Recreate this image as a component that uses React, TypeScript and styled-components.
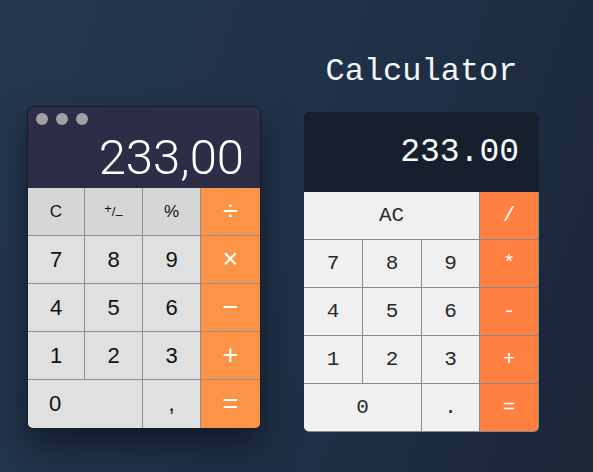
import React from "react";
import styled, { createGlobalStyle } from "styled-components";

const Global = createGlobalStyle`
  html, body { margin: 0; padding: 0; }
  body {
    width: 593px;
    height: 472px;
    overflow: hidden;
    background: linear-gradient(110deg, #23384f 0%, #1f3148 50%, #1b2638 100%);
  }
`;

const Page = styled.div`
  display: flex;
  align-items: flex-start;
  gap: 44px;
  padding-left: 28px;
  height: 472px;
  box-sizing: border-box;
`;

/* ---------- Left: mac style window ---------- */
const Window = styled.div`
  margin-top: 107px;
  width: 232px;
  border-radius: 5px;
  overflow: hidden;
  background: linear-gradient(180deg, #2d2d48 0%, #2a2b43 100%);
  box-shadow: 0 0 0 1px #151d28, 0 18px 34px rgba(5, 10, 18, 0.55);
`;

const TitleBar = styled.div`
  display: flex;
  gap: 8px;
  padding: 6px 0 0 8px;
  height: 20px;
  box-sizing: border-box;
`;

const Dot = styled.span`
  width: 12px;
  height: 12px;
  border-radius: 50%;
  background: #9e9ea3;
`;

const MacDisplay = styled.div`
  height: 61px;
  display: flex;
  align-items: center;
  justify-content: flex-end;
  padding-right: 16px;
  color: #ffffff;
  font-family: Roboto, "Liberation Sans", sans-serif;
  font-weight: 300;
  font-size: 49px;
`;

const MacPad = styled.div`
  display: grid;
  grid-template-columns: 56px 57px 57px 59px;
  grid-template-rows: 47px 47px 47px 47px 48px;
  gap: 1px;
  background: #8f8f8f;
`;

const MacKey = styled.div<{ $kind?: "fn" | "op" | "num"; $span?: number; $left?: boolean }>`
  grid-column: span ${(p) => p.$span ?? 1};
  display: flex;
  align-items: center;
  justify-content: ${(p) => (p.$left ? "flex-start" : "center")};
  padding-left: ${(p) => (p.$left ? "21px" : "0")};
  background: ${(p) => (p.$kind === "op" ? "#fb9446" : p.$kind === "fn" ? "#d6d6d6" : "#e0e0e0")};
  color: ${(p) => (p.$kind === "op" ? "#ffffff" : "#111111")};
  font-family: "Liberation Sans", Arial, sans-serif;
  font-size: ${(p) => (p.$kind === "fn" ? "17px" : p.$kind === "op" ? "27px" : "22px")};
  font-weight: 400;
`;

const PlusMinus = styled.span`
  display: inline-flex;
  align-items: center;
  font-size: 13px;
  line-height: 1;
`;

const PMPart = styled.span<{ $shift: number }>`
  display: inline-block;
  transform: translateY(${(p) => p.$shift}px);
`;

/* ---------- Right: web calculator ---------- */
const Column = styled.div`
  display: flex;
  flex-direction: column;
  align-items: center;
  padding-top: 51px;
`;

const Title = styled.h1`
  margin: 0 0 20px;
  height: 41px;
  line-height: 41px;
  font-family: "Liberation Mono", "DejaVu Sans Mono", monospace;
  font-weight: 400;
  font-size: 32px;
  color: #f4f6f8;
`;

const Calc = styled.div`
  width: 235px;
  border-radius: 5px;
  overflow: hidden;
`;

const WebDisplay = styled.div`
  height: 80px;
  background: #151f2d;
  display: flex;
  align-items: center;
  justify-content: flex-end;
  padding-right: 20px;
  color: #f6f8fa;
  font-family: "Liberation Mono", "DejaVu Sans Mono", monospace;
  font-size: 33px;
`;

const WebPad = styled.div`
  display: grid;
  grid-template-columns: 58px 58px 57px 58px;
  grid-template-rows: repeat(5, 47px);
  gap: 1px;
  background: #8a8a8a;
  border-right: 1px solid #8a8a8a;
  border-bottom: 1px solid #8a8a8a;
  border-radius: 0 0 5px 5px;
  overflow: hidden;
`;

const WebKey = styled.div<{ $op?: boolean; $span?: number }>`
  grid-column: span ${(p) => p.$span ?? 1};
  display: flex;
  align-items: center;
  justify-content: center;
  background: ${(p) => (p.$op ? "#ff8040" : "#f0f0f0")};
  color: ${(p) => (p.$op ? "#ffffff" : "#2a2a2a")};
  font-family: "Liberation Mono", "DejaVu Sans Mono", monospace;
  font-size: 21px;
`;

export default function App() {
  return (
    <>
      <Global />
      <Page>
        <Window>
          <TitleBar>
            <Dot />
            <Dot />
            <Dot />
          </TitleBar>
          <MacDisplay>233,00</MacDisplay>
          <MacPad>
            <MacKey $kind="fn">C</MacKey>
            <MacKey $kind="fn">
              <PlusMinus>
                <PMPart $shift={-3}>+</PMPart>
                <PMPart $shift={0}>/</PMPart>
                <PMPart $shift={3}>–</PMPart>
              </PlusMinus>
            </MacKey>
            <MacKey $kind="fn">%</MacKey>
            <MacKey $kind="op">÷</MacKey>
            <MacKey>7</MacKey>
            <MacKey>8</MacKey>
            <MacKey>9</MacKey>
            <MacKey $kind="op">×</MacKey>
            <MacKey>4</MacKey>
            <MacKey>5</MacKey>
            <MacKey>6</MacKey>
            <MacKey $kind="op">−</MacKey>
            <MacKey>1</MacKey>
            <MacKey>2</MacKey>
            <MacKey>3</MacKey>
            <MacKey $kind="op">+</MacKey>
            <MacKey $span={2} $left>0</MacKey>
            <MacKey>,</MacKey>
            <MacKey $kind="op">=</MacKey>
          </MacPad>
        </Window>
        <Column>
          <Title>Calculator</Title>
          <Calc>
            <WebDisplay>233.00</WebDisplay>
            <WebPad>
              <WebKey $span={3}>AC</WebKey>
              <WebKey $op>/</WebKey>
              <WebKey>7</WebKey>
              <WebKey>8</WebKey>
              <WebKey>9</WebKey>
              <WebKey $op>*</WebKey>
              <WebKey>4</WebKey>
              <WebKey>5</WebKey>
              <WebKey>6</WebKey>
              <WebKey $op>-</WebKey>
              <WebKey>1</WebKey>
              <WebKey>2</WebKey>
              <WebKey>3</WebKey>
              <WebKey $op>+</WebKey>
              <WebKey $span={2}>0</WebKey>
              <WebKey>.</WebKey>
              <WebKey $op>=</WebKey>
            </WebPad>
          </Calc>
        </Column>
      </Page>
    </>
  );
}
